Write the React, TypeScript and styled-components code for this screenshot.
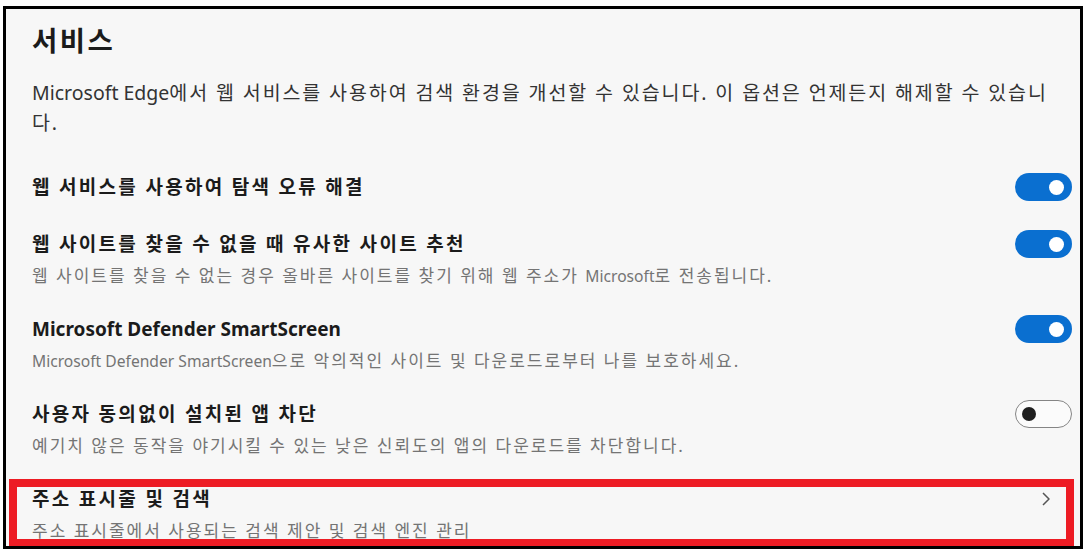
import styled, { createGlobalStyle } from "styled-components";

const GlobalStyle = createGlobalStyle`
  html, body {
    margin: 0;
    padding: 0;
    background: #fff;
  }
  * {
    box-sizing: border-box;
  }
`;

const Page = styled.div`
  padding: 6px 0 0 3px;
  font-family: "Noto Sans", "Noto Sans CJK KR", sans-serif;
`;

const Frame = styled.div`
  width: 1080px;
  height: 543px;
  border: 3px solid #000;
  background: #f7f7f7;
  overflow: hidden;
`;

const Header = styled.h1`
  margin: 0;
  padding: 14px 8px 0 26px;
  font-size: 27.5px;
  line-height: 36px;
  font-weight: 700;
  letter-spacing: 2.5px;
  color: #1b1b1b;
`;

const Intro = styled.p`
  margin: 19px 0 0 26px;
  max-width: 1026px;
  font-size: 19.5px;
  line-height: 30px;
  letter-spacing: 1.9px;
  color: #333;
`;

// latin words are set tighter than the hangul around them
const Latin = styled.span<{ $size: number }>`
  font-size: ${(p) => p.$size}em;
  letter-spacing: 0;
`;

const List = styled.div`
  margin-top: 21px;
  display: flex;
  flex-direction: column;
`;

const Row = styled.div<{ $hasDesc: boolean }>`
  position: relative;
  display: grid;
  grid-template-columns: 1fr auto;
  column-gap: 16px;
  padding: 14px 8px ${(p) => (p.$hasDesc ? "12px" : "15px")} 26px;
`;

const RowText = styled.div`
  display: flex;
  flex-direction: column;
  min-width: 0;
`;

const RowTitle = styled.div`
  font-size: 19px;
  line-height: 28px;
  font-weight: 700;
  letter-spacing: 2.3px;
  color: #1b1b1b;
`;

const RowDesc = styled.div`
  margin-top: 5px;
  font-size: 17px;
  line-height: 26px;
  letter-spacing: 2px;
  color: #747474;
`;

const Toggle = styled.div<{ $on: boolean }>`
  width: 57px;
  height: 28px;
  border-radius: 14px;
  display: flex;
  align-items: center;
  justify-content: ${(p) => (p.$on ? "flex-end" : "flex-start")};
  padding: ${(p) => (p.$on ? "0 8px" : "0 6px")};
  background: ${(p) => (p.$on ? "#0a6fd0" : "#fbfbfb")};
  border: ${(p) => (p.$on ? "none" : "1.5px solid #858585")};

  &::after {
    content: "";
    width: ${(p) => (p.$on ? "15px" : "14px")};
    height: ${(p) => (p.$on ? "15px" : "14px")};
    border-radius: 50%;
    background: ${(p) => (p.$on ? "#fff" : "#1f1f1f")};
  }
`;

const ChevronBox = styled.div`
  height: 28px;
  display: flex;
  align-items: center;
  padding-right: 21px;
  color: #555;
`;

const Highlight = styled.div`
  position: absolute;
  top: 8px;
  left: 3px;
  right: 6px;
  height: 68px;
  border: 8px solid #ed1c24;
  pointer-events: none;
`;

type Setting = {
  title: string;
  desc?: string;
  on?: boolean;
  link?: boolean;
  marked?: boolean;
};

const settings: Setting[] = [
  { title: "웹 서비스를 사용하여 탐색 오류 해결", on: true },
  {
    title: "웹 사이트를 찾을 수 없을 때 유사한 사이트 추천",
    desc: "웹 사이트를 찾을 수 없는 경우 올바른 사이트를 찾기 위해 웹 주소가 Microsoft로 전송됩니다.",
    on: true,
  },
  {
    title: "Microsoft Defender SmartScreen",
    desc: "Microsoft Defender SmartScreen으로 악의적인 사이트 및 다운로드로부터 나를 보호하세요.",
    on: true,
  },
  {
    title: "사용자 동의없이 설치된 앱 차단",
    desc: "예기치 않은 동작을 야기시킬 수 있는 낮은 신뢰도의 앱의 다운로드를 차단합니다.",
    on: false,
  },
  {
    title: "주소 표시줄 및 검색",
    desc: "주소 표시줄에서 사용되는 검색 제안 및 검색 엔진 관리",
    link: true,
    marked: true,
  },
];

function Mixed({ text, latin }: { text: string; latin: number }) {
  const parts = text.split(/([A-Za-z]+(?: [A-Za-z]+)*)/);
  return (
    <>
      {parts.map((part, i) =>
        i % 2 === 1 ? (
          <Latin key={i} $size={latin}>
            {part}
          </Latin>
        ) : (
          part
        )
      )}
    </>
  );
}

function Chevron() {
  return (
    <svg width="10" height="16" viewBox="0 0 10 16" fill="none">
      <path d="M2 2 L8 8 L2 14" stroke="currentColor" strokeWidth="1.5" strokeLinejoin="round" />
    </svg>
  );
}

function SettingRow({ title, desc, on, link, marked }: Setting) {
  return (
    <Row $hasDesc={!!desc}>
      <RowText>
        <RowTitle>
          <Mixed text={title} latin={1} />
        </RowTitle>
        {desc ? (
          <RowDesc>
            <Mixed text={desc} latin={0.92} />
          </RowDesc>
        ) : null}
      </RowText>
      {link ? (
        <ChevronBox>
          <Chevron />
        </ChevronBox>
      ) : (
        <Toggle $on={!!on} />
      )}
      {marked ? <Highlight /> : null}
    </Row>
  );
}

export default function App() {
  return (
    <>
      <GlobalStyle />
      <Page>
        <Frame>
          <Header>서비스</Header>
          <Intro>
            <Mixed
              text="Microsoft Edge에서 웹 서비스를 사용하여 검색 환경을 개선할 수 있습니다. 이 옵션은 언제든지 해제할 수 있습니다."
              latin={1}
            />
          </Intro>
          <List>
            {settings.map((s) => (
              <SettingRow key={s.title} {...s} />
            ))}
          </List>
        </Frame>
      </Page>
    </>
  );
}
